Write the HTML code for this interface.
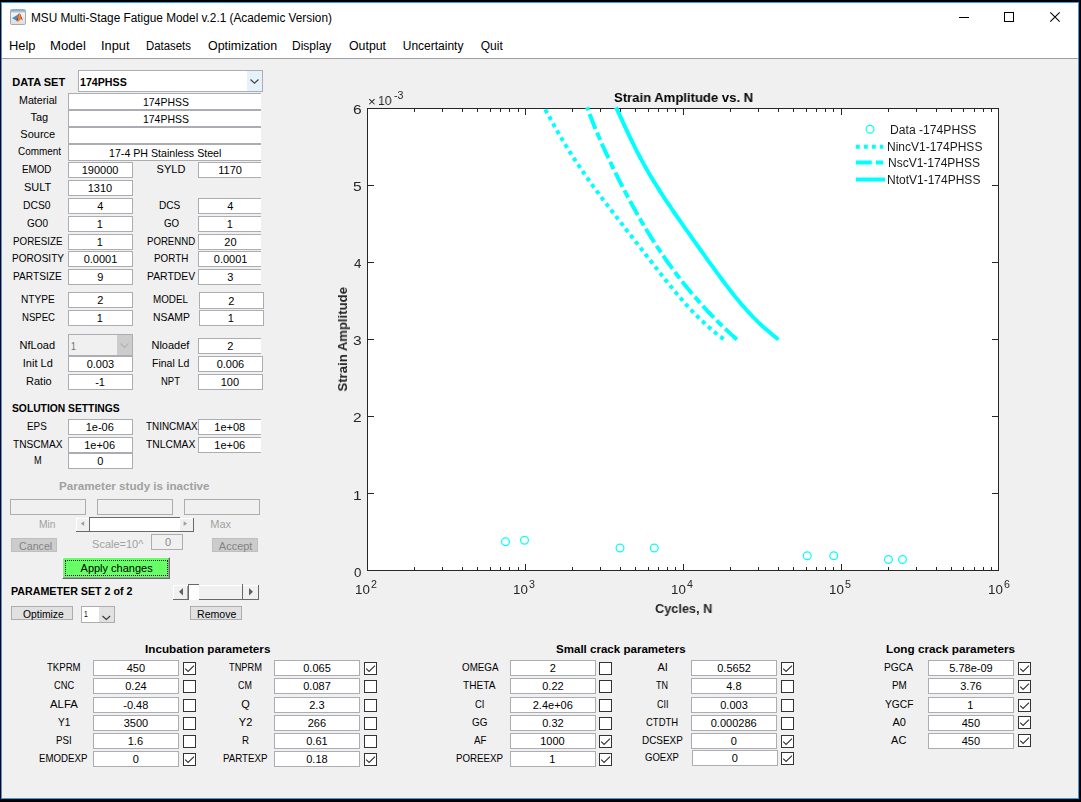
<!DOCTYPE html><html lang="en"><head><meta charset="utf-8"><title>MSU Multi-Stage Fatigue Model v.2.1 (Academic Version)</title><style>
html,body{margin:0;padding:0}
body{width:1081px;height:802px;background:#000;overflow:hidden;position:relative;font-family:"Liberation Sans",sans-serif;font-size:11px;color:#000}
#win{position:absolute;left:1px;top:2px;width:1076px;height:795px;border:1px solid #379de6;background:#f0f0f0;overflow:hidden}
#page{position:absolute;left:-2px;top:-3px;width:1081px;height:802px}
#cap{position:absolute;left:2px;top:3px;width:1076px;height:55px;background:#fff;border-bottom:1px solid #a0a0a0}
.t{position:absolute;white-space:pre;line-height:16px;height:16px;transform-origin:0 0;font-size:11px}
.ed{position:absolute;box-sizing:content-box;border:1px solid #abadb3;background:#fff}
.ed.dis2{background:#f0f0f0;border-color:#adadad}
.clip{position:absolute;overflow:hidden}
.combo{position:absolute;border:1px solid #abadb3;background:#fff}
.combo.dis{border-color:#abadb3;background:#f0f0f0}
.cbtn{position:absolute}
.chev{position:absolute}
.btn{position:absolute;border:1px solid #adadad;background:#e1e1e1}
.btn.bdis{border-color:#bfbfbf;background:#cccccc}
.cb{position:absolute;width:11px;height:11px;border:1px solid #333;background:#fff}
.cb svg{position:absolute;left:0;top:0}
.sl{position:absolute;background:#f0f0f0;box-shadow:inset -1px -1px 0 #696969,inset 1px 1px 0 #fff}
.slw{position:absolute;background:#fff;border-top:1px solid #696969;border-left:1px solid #696969}
.th{position:absolute;background:#fff;border-top:1px solid #696969;border-left:1px solid #696969}
.vln{position:absolute;width:1px;background:#696969}
.apply{position:absolute;background:#66ff66;border-top:1px solid #fff;border-left:1px solid #fff;border-right:1px solid #696969;border-bottom:1px solid #696969;box-shadow:inset -1px -1px 0 #a0a0a0}
.focus{position:absolute;left:2px;top:2px;right:1px;bottom:2px;border:1px dotted #000}
#plot{position:absolute;left:0;top:0}
.g{will-change:transform}
</style></head><body>
<div id="win"><div id="page">
<div id="cap"></div>
<section id="titlebar">
<svg style="position:absolute;left:10px;top:9px" width="16" height="16" viewBox="0 0 16 16"><defs><linearGradient id="ig" x1="0" y1="0" x2="0" y2="1"><stop offset="0" stop-color="#fafafa"/><stop offset="1" stop-color="#dedede"/></linearGradient></defs><rect x="0.5" y="0.5" width="15" height="15" rx="1.3" fill="url(#ig)" stroke="#a3abb3"/><rect x="1" y="1" width="14" height="1.6" fill="#7fb2df"/><path d="M1 3 H15" stroke="#a9b1b9" stroke-width="0.8"/><path d="M2 9.2 L8 5.5 L7.3 9 L6 11.2 Z" fill="#3d8dcf"/><path d="M8 5.5 L9 4.2 L8.7 8 L7.6 12.6 L6 11.2 L7.3 9 Z" fill="#9a3222"/><path d="M9 4.2 L9.4 3.9 L10.2 6.5 L10.6 10.4 L8.8 12.3 L7.2 13 L7.6 12.4 L8.7 8 Z" fill="#ee7e1e"/><path d="M9.3 4.4 L10 7.6 L9.5 8.4 Z" fill="#f8d22e"/><path d="M7.2 13 L8.8 12.3 L8.3 11 L7.6 12 Z" fill="#f6b526"/><path d="M9.5 3.9 L10.5 5.2 L13 11.5 L11.7 10.3 L10.6 10.4 L10.2 6.5 Z" fill="#c6402c"/></svg>
<svg style="position:absolute;left:950px;top:8px" width="120" height="20" viewBox="950 8 120 20"><path d="M959 17.5 H969" stroke="#000" stroke-width="1" shape-rendering="crispEdges"/><rect x="1004.5" y="12.5" width="9" height="9" fill="none" stroke="#000" stroke-width="1" shape-rendering="crispEdges"/><path d="M1050.3 12.3 L1059.7 21.7 M1059.7 12.3 L1050.3 21.7" stroke="#000" stroke-width="1.05"/></svg>
<span class="t ttl" style="left:30.62px;top:10.0px;font-size:12px;transform:scaleX(0.9836)">MSU Multi-Stage Fatigue Model v.2.1 (Academic Version)</span>
</section>
<section id="menubar">
<span class="t mi" style="left:9.23px;top:38.0px;font-size:12px;transform:scaleX(1.0739)">Help</span>
<span class="t mi" style="left:49.90px;top:38.0px;font-size:12px;transform:scaleX(1.0968)">Model</span>
<span class="t mi" style="left:101.23px;top:38.0px;font-size:12px;transform:scaleX(1.0654)">Input</span>
<span class="t mi" style="left:146.35px;top:38.0px;font-size:12px;transform:scaleX(0.9500)">Datasets</span>
<span class="t mi" style="left:208.30px;top:38.0px;font-size:12px;transform:scaleX(1.0364)">Optimization</span>
<span class="t mi" style="left:292.02px;top:38.0px;font-size:12px">Display</span>
<span class="t mi" style="left:348.75px;top:38.0px;font-size:12px;transform:scaleX(1.0278)">Output</span>
<span class="t mi" style="left:402.75px;top:38.0px;font-size:12px">Uncertainty</span>
<span class="t mi" style="left:480.75px;top:38.0px;font-size:12px">Quit</span>
</section>
<section id="dataset-panel">
<div class="combo" style="left:78px;top:70px;width:183px;height:20px"><div class="cbtn" style="left:168px;top:0;width:15px;height:20px;background:#e5f1fb"></div><svg class="chev" style="left:169.6px;top:7.3px" width="11" height="7" viewBox="0 0 11 7"><path d="M1.5 1.5 L5.5 5.2 L9.5 1.5" fill="none" stroke="#444" stroke-width="1.2"/></svg></div>
<div class="clip" style="left:0;top:60px;width:261px;height:420px">
<div class="ed" style="left:68px;top:33px;width:193px;height:15px"></div>
<div class="ed" style="left:68px;top:50px;width:193px;height:15px"></div>
<div class="ed" style="left:68px;top:67px;width:193px;height:15px"></div>
<div class="ed" style="left:68px;top:84px;width:193px;height:15px"></div>
<div class="ed" style="left:198px;top:102px;width:63px;height:14px"></div>
<div class="ed" style="left:198px;top:138px;width:63px;height:14px"></div>
<div class="ed" style="left:198px;top:156px;width:63px;height:14px"></div>
<div class="ed" style="left:198px;top:174px;width:63px;height:14px"></div>
<div class="ed" style="left:198px;top:191px;width:63px;height:14px"></div>
<div class="ed" style="left:198px;top:209px;width:63px;height:14px"></div>
<div class="ed" style="left:198px;top:278px;width:63px;height:14px"></div>
<div class="ed" style="left:198px;top:359px;width:63px;height:14px"></div>
<div class="ed" style="left:198px;top:377px;width:63px;height:14px"></div>
</div>
<div class="ed" style="left:68px;top:162px;width:63px;height:14px;line-height:14px"></div>
<div class="ed" style="left:68px;top:180px;width:63px;height:14px;line-height:14px"></div>
<div class="ed" style="left:68px;top:198px;width:63px;height:14px;line-height:14px"></div>
<div class="ed" style="left:68px;top:216px;width:63px;height:14px;line-height:14px"></div>
<div class="ed" style="left:68px;top:234px;width:63px;height:14px;line-height:14px"></div>
<div class="ed" style="left:68px;top:251px;width:63px;height:14px;line-height:14px"></div>
<div class="ed" style="left:68px;top:269px;width:63px;height:14px;line-height:14px"></div>
<div class="ed" style="left:68px;top:292px;width:63px;height:14px;line-height:14px"></div>
<div class="ed" style="left:68px;top:310px;width:63px;height:14px;line-height:14px"></div>
<div class="ed" style="left:68px;top:356px;width:63px;height:14px;line-height:14px"></div>
<div class="ed" style="left:68px;top:374px;width:63px;height:14px;line-height:14px"></div>
<div class="ed" style="left:68px;top:419px;width:63px;height:14px;line-height:14px"></div>
<div class="ed" style="left:68px;top:437px;width:63px;height:14px;line-height:14px"></div>
<div class="ed" style="left:68px;top:453px;width:63px;height:14px;line-height:14px"></div>
<div class="ed" style="left:199px;top:292px;width:63px;height:15px;line-height:16px"></div>
<div class="ed" style="left:199px;top:310px;width:63px;height:14px;line-height:14px"></div>
<div class="ed" style="left:198px;top:356px;width:63px;height:14px;line-height:14px"></div>
<div class="ed" style="left:198px;top:374px;width:63px;height:14px;line-height:14px"></div>
<div class="combo dis" style="left:68px;top:334px;width:63px;height:20px"><div class="cbtn" style="left:48px;top:0;width:15px;height:20px;background:#cccccc"></div><svg class="chev" style="left:49.7px;top:6.8px" width="11" height="7" viewBox="0 0 11 7"><path d="M1.5 1.5 L5.5 5.4 L9.5 1.5" fill="none" stroke="#b2b2b2" stroke-width="1.1"/></svg></div>
<span class="t" style="left:12.20px;top:74.0px;font-weight:bold">DATA SET</span>
<span class="t" style="left:80.33px;top:74.0px;font-weight:bold;transform:scaleX(0.9681)">174PHSS</span>
<span class="t" style="left:19.43px;top:92.0px;transform:scaleX(0.9697)">Material</span>
<span class="t" style="left:142.55px;top:94.0px;transform:scaleX(0.9489)">174PHSS</span>
<span class="t" style="left:30.45px;top:109.0px">Tag</span>
<span class="t" style="left:142.55px;top:111.0px;transform:scaleX(0.9489)">174PHSS</span>
<span class="t" style="left:20.33px;top:126.0px">Source</span>
<span class="t" style="left:17.50px;top:143.0px;transform:scaleX(0.9042)">Comment</span>
<span class="t" style="left:109.03px;top:145.0px;transform:scaleX(0.9674)">17-4 PH Stainless Steel</span>
<span class="t" style="left:218.30px;top:162.0px">1170</span>
<span class="t" style="left:227.30px;top:198.0px">4</span>
<span class="t" style="left:226.80px;top:216.0px">1</span>
<span class="t" style="left:224.30px;top:234.0px">20</span>
<span class="t" style="left:213.80px;top:251.0px">0.0001</span>
<span class="t" style="left:227.30px;top:269.0px">3</span>
<span class="t" style="left:227.30px;top:338.0px">2</span>
<span class="t" style="left:214.30px;top:419.0px">1e+08</span>
<span class="t" style="left:214.30px;top:437.0px">1e+06</span>
<span class="t" style="left:81.70px;top:162.0px">190000</span>
<span class="t" style="left:22.21px;top:161.0px;transform:scaleX(0.8875)">EMOD</span>
<span class="t" style="left:87.70px;top:180.0px">1310</span>
<span class="t" style="left:24.00px;top:179.0px">SULT</span>
<span class="t" style="left:97.20px;top:198.0px">4</span>
<span class="t" style="left:23.16px;top:197.0px;transform:scaleX(0.9393)">DCS0</span>
<span class="t" style="left:96.70px;top:216.0px">1</span>
<span class="t" style="left:27.25px;top:215.0px;transform:scaleX(0.9065)">GO0</span>
<span class="t" style="left:96.70px;top:234.0px">1</span>
<span class="t" style="left:12.61px;top:233.0px;transform:scaleX(0.8889)">PORESIZE</span>
<span class="t" style="left:83.70px;top:251.0px">0.0001</span>
<span class="t" style="left:11.58px;top:250.0px;transform:scaleX(0.9152)">POROSITY</span>
<span class="t" style="left:97.20px;top:269.0px">9</span>
<span class="t" style="left:12.58px;top:268.0px;transform:scaleX(0.9231)">PARTSIZE</span>
<span class="t" style="left:97.20px;top:292.0px">2</span>
<span class="t" style="left:20.58px;top:291.0px;transform:scaleX(0.9214)">NTYPE</span>
<span class="t" style="left:96.70px;top:310.0px">1</span>
<span class="t" style="left:21.63px;top:309.0px;transform:scaleX(0.8716)">NSPEC</span>
<span class="t" style="left:86.70px;top:356.0px">0.003</span>
<span class="t" style="left:22.80px;top:355.0px">Init Ld</span>
<span class="t" style="left:95.20px;top:374.0px">-1</span>
<span class="t" style="left:26.05px;top:373.0px">Ratio</span>
<span class="t" style="left:85.70px;top:419.0px">1e-06</span>
<span class="t" style="left:27.20px;top:418.0px;transform:scaleX(0.8952)">EPS</span>
<span class="t" style="left:84.20px;top:437.0px">1e+06</span>
<span class="t" style="left:13.10px;top:436.0px;transform:scaleX(0.9222)">TNSCMAX</span>
<span class="t" style="left:97.20px;top:453.0px">0</span>
<span class="t" style="left:33.77px;top:452.0px;transform:scaleX(0.8312)">M</span>
<span class="t" style="left:19.58px;top:337.0px">NfLoad</span>
<span class="t" style="left:156.62px;top:161.0px">SYLD</span>
<span class="t" style="left:159.48px;top:197.0px;transform:scaleX(0.9182)">DCS</span>
<span class="t" style="left:163.50px;top:215.0px;transform:scaleX(0.8824)">GO</span>
<span class="t" style="left:146.62px;top:233.0px;transform:scaleX(0.8750)">PORENND</span>
<span class="t" style="left:153.51px;top:250.0px;transform:scaleX(0.8946)">PORTH</span>
<span class="t" style="left:146.56px;top:268.0px;transform:scaleX(0.9450)">PARTDEV</span>
<span class="t" style="left:152.61px;top:291.0px;transform:scaleX(0.8947)">MODEL</span>
<span class="t" style="left:152.56px;top:309.0px;transform:scaleX(0.9447)">NSAMP</span>
<span class="t" style="left:151.45px;top:337.0px">Nloadef</span>
<span class="t" style="left:151.55px;top:355.0px;transform:scaleX(0.9539)">Final Ld</span>
<span class="t" style="left:160.74px;top:373.0px;transform:scaleX(0.8643)">NPT</span>
<span class="t" style="left:145.60px;top:418.0px;transform:scaleX(0.9000)">TNINCMAX</span>
<span class="t" style="left:146.25px;top:436.0px;transform:scaleX(0.9375)">TNLCMAX</span>
<span class="t" style="left:228.20px;top:293.0px">2</span>
<span class="t" style="left:227.70px;top:310.0px">1</span>
<span class="t" style="left:216.70px;top:356.0px">0.006</span>
<span class="t" style="left:220.70px;top:374.0px">100</span>
<span class="t" style="left:71.20px;top:338.0px;color:#6d6d6d;transform:scaleX(0.8000)">1</span>
</section>
<section id="solution-settings">
<span class="t" style="left:12.10px;top:400.0px;font-weight:bold;transform:scaleX(0.9361)">SOLUTION SETTINGS</span>
</section>
<section id="parameter-study">
<div class="ed dis2" style="left:10px;top:499px;width:74px;height:14px"></div>
<div class="ed dis2" style="left:97px;top:499px;width:74px;height:14px"></div>
<div class="ed dis2" style="left:184px;top:499px;width:74px;height:14px"></div>
<div class="sl" style="left:76px;top:518px;width:118px;height:14px"><div class="slw" style="left:13px;top:-1px;width:90px;height:13px"></div><svg style="position:absolute;left:4px;top:3px" width="6" height="6"><path d="M4.2 0.2 L0.8 2.5 L4.2 4.9 Z" fill="#a0a0a0"/></svg><svg style="position:absolute;left:107px;top:3px" width="6" height="6"><path d="M0.6 0.2 L4.2 2.5 L0.6 4.9 Z" fill="#a0a0a0"/></svg></div>
<div class="btn bdis" style="left:11px;top:538px;width:44px;height:12px"></div>
<div class="btn bdis" style="left:212px;top:538px;width:44px;height:12px"></div>
<div class="ed dis2" style="left:151px;top:534px;width:30px;height:14px"></div>
<div class="apply" style="left:62px;top:557px;width:106px;height:20px"><div class="focus"></div></div>
<span class="t" style="left:58.54px;top:478.0px;font-weight:bold;color:#a0a0a0;transform:scaleX(1.0567)">Parameter study is inactive</span>
<span class="t" style="left:38.82px;top:516.0px;color:#a0a0a0;transform:scaleX(0.9281)">Min</span>
<span class="t" style="left:210.25px;top:516.0px;color:#a0a0a0">Max</span>
<span class="t" style="left:18.50px;top:538.0px;color:#838383;transform:scaleX(0.9706)">Cancel</span>
<span class="t" style="left:218.80px;top:538.0px;color:#838383">Accept</span>
<span class="t" style="left:92.05px;top:536.0px;color:#a0a0a0">Scale=10^</span>
<span class="t" style="left:164.90px;top:534.0px;color:#8a8a8a">0</span>
<span class="t" style="left:80.55px;top:560.0px">Apply changes</span>
</section>
<section id="parameter-set">
<div class="sl" style="left:173px;top:585px;width:86px;height:15px"><div class="th" style="left:15px;top:-1px;width:10px;height:15px"></div><div class="vln" style="left:14px;top:1px;height:13px;background:#a0a0a0"></div><div class="vln" style="left:69px;top:-1px;height:15px"></div><svg style="position:absolute;left:5px;top:3px" width="6" height="8"><path d="M5 0 L1 3.75 L5 7.5 Z" fill="#606060"/></svg><svg style="position:absolute;left:75px;top:3px" width="6" height="8"><path d="M1 0 L5 3.75 L1 7.5 Z" fill="#606060"/></svg></div>
<div class="btn" style="left:11px;top:606px;width:60px;height:12px"></div>
<div class="btn" style="left:190px;top:606px;width:50px;height:12px"></div>
<div class="combo sm" style="left:81px;top:606px;width:32px;height:15px"><div class="cbtn" style="left:17px;top:0;width:15px;height:15px;background:#e1e1e1"></div><svg class="chev" style="left:19px;top:8px" width="11" height="6" viewBox="0 0 11 6"><path d="M1.5 1 L5.3 4.4 L9.1 1" fill="none" stroke="#333" stroke-width="1.1"/></svg></div>
<span class="t" style="left:10.53px;top:583.0px;font-weight:bold;transform:scaleX(0.9710)">PARAMETER SET 2 of 2</span>
<span class="t" style="left:22.50px;top:606.0px;transform:scaleX(0.9395)">Optimize</span>
<span class="t" style="left:196.54px;top:606.0px;transform:scaleX(0.9625)">Remove</span>
<span class="t" style="left:83.65px;top:606.0px;font-size:9px;transform:scaleX(0.7500)">1</span>
</section>
<section id="axes">
<svg id="plot" width="1081" height="802" viewBox="0 0 1081 802"><defs><clipPath id="axclip"><rect x="367.5" y="108.5" width="631.0" height="462.0"/></clipPath></defs><rect x="367.5" y="108.5" width="631.0" height="462.0" fill="#fff" stroke="none"/><circle cx="505.5" cy="541.75" r="3.9" fill="none" stroke="#00ffff" stroke-width="1.2"/><circle cx="524.5" cy="540.25" r="3.9" fill="none" stroke="#00ffff" stroke-width="1.2"/><circle cx="620" cy="548" r="3.9" fill="none" stroke="#00ffff" stroke-width="1.2"/><circle cx="654.25" cy="548" r="3.9" fill="none" stroke="#00ffff" stroke-width="1.2"/><circle cx="807.25" cy="555.75" r="3.9" fill="none" stroke="#00ffff" stroke-width="1.2"/><circle cx="833.75" cy="555.75" r="3.9" fill="none" stroke="#00ffff" stroke-width="1.2"/><circle cx="888.5" cy="559.5" r="3.9" fill="none" stroke="#00ffff" stroke-width="1.2"/><circle cx="902.5" cy="559.5" r="3.9" fill="none" stroke="#00ffff" stroke-width="1.2"/><path d="M414.5 570.5 v-3.5 M414.5 108.5 v3.5 M442.5 570.5 v-3.5 M442.5 108.5 v3.5 M462.5 570.5 v-3.5 M462.5 108.5 v3.5 M477.5 570.5 v-3.5 M477.5 108.5 v3.5 M490.5 570.5 v-3.5 M490.5 108.5 v3.5 M500.5 570.5 v-3.5 M500.5 108.5 v3.5 M509.5 570.5 v-3.5 M509.5 108.5 v3.5 M518.5 570.5 v-3.5 M518.5 108.5 v3.5 M525.5 570.5 v-6.5 M525.5 108.5 v6.5 M572.5 570.5 v-3.5 M572.5 108.5 v3.5 M600.5 570.5 v-3.5 M600.5 108.5 v3.5 M620.5 570.5 v-3.5 M620.5 108.5 v3.5 M635.5 570.5 v-3.5 M635.5 108.5 v3.5 M648.5 570.5 v-3.5 M648.5 108.5 v3.5 M658.5 570.5 v-3.5 M658.5 108.5 v3.5 M667.5 570.5 v-3.5 M667.5 108.5 v3.5 M675.5 570.5 v-3.5 M675.5 108.5 v3.5 M683.5 570.5 v-6.5 M683.5 108.5 v6.5 M730.5 570.5 v-3.5 M730.5 108.5 v3.5 M758.5 570.5 v-3.5 M758.5 108.5 v3.5 M778.5 570.5 v-3.5 M778.5 108.5 v3.5 M793.5 570.5 v-3.5 M793.5 108.5 v3.5 M806.5 570.5 v-3.5 M806.5 108.5 v3.5 M816.5 570.5 v-3.5 M816.5 108.5 v3.5 M825.5 570.5 v-3.5 M825.5 108.5 v3.5 M833.5 570.5 v-3.5 M833.5 108.5 v3.5 M841.5 570.5 v-6.5 M841.5 108.5 v6.5 M888.5 570.5 v-3.5 M888.5 108.5 v3.5 M916.5 570.5 v-3.5 M916.5 108.5 v3.5 M936.5 570.5 v-3.5 M936.5 108.5 v3.5 M951.5 570.5 v-3.5 M951.5 108.5 v3.5 M963.5 570.5 v-3.5 M963.5 108.5 v3.5 M974.5 570.5 v-3.5 M974.5 108.5 v3.5 M983.5 570.5 v-3.5 M983.5 108.5 v3.5 M991.5 570.5 v-3.5 M991.5 108.5 v3.5 M367.5 493.5 h6.5 M998.5 493.5 h-6.5 M367.5 416.5 h6.5 M998.5 416.5 h-6.5 M367.5 339.5 h6.5 M998.5 339.5 h-6.5 M367.5 262.5 h6.5 M998.5 262.5 h-6.5 M367.5 185.5 h6.5 M998.5 185.5 h-6.5" stroke="#262626" stroke-width="1" fill="none" shape-rendering="crispEdges"/><rect x="367.5" y="108.5" width="631.0" height="462.0" fill="none" stroke="#262626" stroke-width="1" shape-rendering="crispEdges"/><polyline points="544.7,108.5 546.9,112.4 549.1,116.3 551.2,120.2 553.4,124.2 555.6,128.1 557.8,132.0 560.1,135.9 562.4,139.8 564.7,143.7 567.1,147.7 569.6,151.6 572.0,155.5 574.6,159.4 577.2,163.3 579.8,167.2 582.5,171.1 585.2,175.1 588.0,179.0 590.8,182.9 593.6,186.8 596.5,190.7 599.4,194.6 602.3,198.6 605.3,202.5 608.3,206.4 611.3,210.3 614.3,214.2 617.3,218.1 620.4,222.0 623.4,226.0 626.5,229.9 629.5,233.8 632.6,237.7 635.6,241.6 638.7,245.5 641.7,249.4 644.8,253.4 647.8,257.3 650.9,261.2 653.9,265.1 657.0,269.0 660.0,272.9 663.1,276.9 666.2,280.8 669.4,284.7 672.6,288.6 675.8,292.5 679.1,296.4 682.4,300.3 685.9,304.3 689.5,308.2 693.1,312.1 697.0,316.0 700.9,319.9 705.1,323.8 709.5,327.8 714.0,331.7 718.9,335.6 724.0,339.5" fill="none" stroke="#00ffff" stroke-width="4" stroke-dasharray="4 4" stroke-dashoffset="-1.2"/><polyline points="587.1,107.3 588.5,111.2 590.0,115.2 591.5,119.1 593.1,123.0 594.7,127.0 596.3,130.9 598.0,134.8 599.7,138.8 601.4,142.7 603.2,146.7 605.0,150.6 606.8,154.5 608.6,158.5 610.5,162.4 612.3,166.3 614.2,170.3 616.2,174.2 618.1,178.1 620.1,182.1 622.1,186.0 624.2,189.9 626.2,193.9 628.3,197.8 630.4,201.8 632.6,205.7 634.8,209.6 637.0,213.6 639.2,217.5 641.5,221.4 643.8,225.4 646.2,229.3 648.6,233.2 651.0,237.2 653.5,241.1 656.1,245.0 658.6,249.0 661.3,252.9 664.0,256.9 666.7,260.8 669.5,264.7 672.4,268.7 675.3,272.6 678.3,276.5 681.3,280.5 684.4,284.4 687.6,288.3 690.9,292.3 694.2,296.2 697.7,300.1 701.2,304.1 704.7,308.0 708.4,312.0 712.2,315.9 716.1,319.8 720.0,323.8 724.1,327.7 728.2,331.6 732.5,335.6 736.9,339.5" fill="none" stroke="#00ffff" stroke-width="4" stroke-dasharray="16 4 8 4" stroke-dashoffset="24.8"/><polyline points="615.9,107.3 617.8,111.2 619.7,115.2 621.5,119.1 623.3,123.0 625.1,127.0 627.0,130.9 628.8,134.8 630.7,138.8 632.6,142.7 634.6,146.7 636.5,150.6 638.6,154.5 640.7,158.5 642.8,162.4 645.0,166.3 647.2,170.3 649.5,174.2 651.9,178.1 654.3,182.1 656.7,186.0 659.2,189.9 661.7,193.9 664.3,197.8 666.9,201.8 669.6,205.7 672.2,209.6 674.9,213.6 677.6,217.5 680.4,221.4 683.1,225.4 685.9,229.3 688.7,233.2 691.5,237.2 694.3,241.1 697.1,245.0 699.9,249.0 702.7,252.9 705.5,256.9 708.3,260.8 711.1,264.7 714.0,268.7 716.9,272.6 719.8,276.5 722.7,280.5 725.6,284.4 728.6,288.3 731.7,292.3 734.8,296.2 738.0,300.1 741.3,304.1 744.8,308.0 748.3,312.0 752.0,315.9 755.9,319.8 759.9,323.8 764.2,327.7 768.7,331.6 773.5,335.6 778.5,339.5" fill="none" stroke="#00ffff" stroke-width="4"/><circle cx="870" cy="129.3" r="3.9" fill="none" stroke="#00ffff" stroke-width="1.2"/><path d="M855.8 146.8 H883.3" stroke="#00ffff" stroke-width="4" stroke-dasharray="4 4" fill="none"/><path d="M855.8 162.5 H883.3" stroke="#00ffff" stroke-width="4" stroke-dasharray="16 4 8 4" fill="none"/><path d="M855.8 179.5 H885" stroke="#00ffff" stroke-width="4" fill="none"/></svg>
<span class="t g" id="ylab" style="left:0;top:0;font-size:13.33px;font-weight:bold;color:#262626;transform-origin:0 0;transform:translate(335.0px,391.5px) rotate(-90deg) scaleX(0.984)">Strain Amplitude</span>
<span class="t g" style="left:613.52px;top:90.0px;font-size:13.33px;font-weight:bold;transform:scaleX(0.9821)">Strain Amplitude vs. N</span>
<span class="t g" style="left:654.50px;top:601.0px;font-size:13.33px;font-weight:bold;color:#262626;transform:scaleX(0.9542)">Cycles, N</span>
<span class="t g" style="left:354.00px;top:564.6px;font-size:13.33px;color:#262626">0</span>
<span class="t g" style="left:352.83px;top:487.5px;font-size:13.33px;color:#262626;transform:scaleX(1.1667)">1</span>
<span class="t g" style="left:352.83px;top:410.4px;font-size:13.33px;color:#262626;transform:scaleX(1.1667)">2</span>
<span class="t g" style="left:352.83px;top:333.3px;font-size:13.33px;color:#262626;transform:scaleX(1.1667)">3</span>
<span class="t g" style="left:354.00px;top:256.3px;font-size:13.33px;color:#262626">4</span>
<span class="t g" style="left:352.83px;top:179.2px;font-size:13.33px;color:#262626;transform:scaleX(1.1667)">5</span>
<span class="t g" style="left:352.83px;top:102.1px;font-size:13.33px;color:#262626;transform:scaleX(1.1667)">6</span>
<span class="t g" style="left:355.45px;top:582.2px;font-size:13.33px;color:#262626">10</span>
<span class="t g" style="left:371.35px;top:576.2px;font-size:10.67px;color:#262626">2</span>
<span class="t g" style="left:513.45px;top:582.2px;font-size:13.33px;color:#262626">10</span>
<span class="t g" style="left:529.35px;top:576.2px;font-size:10.67px;color:#262626">3</span>
<span class="t g" style="left:671.45px;top:582.2px;font-size:13.33px;color:#262626">10</span>
<span class="t g" style="left:687.35px;top:576.2px;font-size:10.67px;color:#262626">4</span>
<span class="t g" style="left:829.45px;top:582.2px;font-size:13.33px;color:#262626">10</span>
<span class="t g" style="left:845.35px;top:576.2px;font-size:10.67px;color:#262626">5</span>
<span class="t g" style="left:987.65px;top:582.2px;font-size:13.33px;color:#262626">10</span>
<span class="t g" style="left:1003.55px;top:576.2px;font-size:10.67px;color:#262626">6</span>
<span class="t g" style="left:367.95px;top:94.2px;font-size:13.33px;color:#262626">×</span>
<span class="t g" style="left:377.99px;top:93.0px;font-size:13.33px;color:#262626;transform:scaleX(0.9071)">10</span>
<span class="t g" style="left:393.60px;top:87.0px;font-size:10.67px;color:#262626">-3</span>
<span class="t g" style="left:890.24px;top:122.0px;font-size:12px;color:#1a1a1a;transform:scaleX(1.0119)">Data -174PHSS</span>
<span class="t g" style="left:887.35px;top:139.0px;font-size:12px;color:#1a1a1a">NincV1-174PHSS</span>
<span class="t g" style="left:887.60px;top:155.0px;font-size:12px;color:#1a1a1a">NscV1-174PHSS</span>
<span class="t g" style="left:887.48px;top:172.0px;font-size:12px;color:#1a1a1a">NtotV1-174PHSS</span>
</section>
<section id="incubation-parameters">
<div class="ed" style="left:93px;top:660px;width:84px;height:14px;line-height:14px"></div>
<div class="cb" style="left:183px;top:662px"><svg width="11" height="11" viewBox="0 0 11 11"><path d="M1.2 5.6 L4.1 8.5 L10 2.6" fill="none" stroke="#333" stroke-width="1.15"/></svg></div>
<div class="ed" style="left:93px;top:678px;width:84px;height:14px;line-height:14px"></div>
<div class="cb" style="left:183px;top:680px"></div>
<div class="ed" style="left:93px;top:697px;width:84px;height:14px;line-height:14px"></div>
<div class="cb" style="left:183px;top:699px"></div>
<div class="ed" style="left:93px;top:715px;width:84px;height:14px;line-height:14px"></div>
<div class="cb" style="left:183px;top:717px"></div>
<div class="ed" style="left:93px;top:733px;width:84px;height:14px;line-height:14px"></div>
<div class="cb" style="left:183px;top:735px"></div>
<div class="ed" style="left:93px;top:751px;width:84px;height:14px;line-height:14px"></div>
<div class="cb" style="left:183px;top:753px"><svg width="11" height="11" viewBox="0 0 11 11"><path d="M1.2 5.6 L4.1 8.5 L10 2.6" fill="none" stroke="#333" stroke-width="1.15"/></svg></div>
<div class="ed" style="left:274px;top:660px;width:84px;height:14px;line-height:14px"></div>
<div class="cb" style="left:364px;top:662px"><svg width="11" height="11" viewBox="0 0 11 11"><path d="M1.2 5.6 L4.1 8.5 L10 2.6" fill="none" stroke="#333" stroke-width="1.15"/></svg></div>
<div class="ed" style="left:274px;top:678px;width:84px;height:14px;line-height:14px"></div>
<div class="cb" style="left:364px;top:680px"></div>
<div class="ed" style="left:274px;top:697px;width:84px;height:14px;line-height:14px"></div>
<div class="cb" style="left:364px;top:699px"></div>
<div class="ed" style="left:274px;top:715px;width:84px;height:14px;line-height:14px"></div>
<div class="cb" style="left:364px;top:717px"></div>
<div class="ed" style="left:274px;top:733px;width:84px;height:14px;line-height:14px"></div>
<div class="cb" style="left:364px;top:735px"></div>
<div class="ed" style="left:274px;top:751px;width:84px;height:14px;line-height:14px"></div>
<div class="cb" style="left:364px;top:753px"><svg width="11" height="11" viewBox="0 0 11 11"><path d="M1.2 5.6 L4.1 8.5 L10 2.6" fill="none" stroke="#333" stroke-width="1.15"/></svg></div>
<span class="t" style="left:145.19px;top:641.0px;font-weight:bold;transform:scaleX(1.0628)">Incubation parameters</span>
<span class="t" style="left:126.75px;top:660.0px">450</span>
<span class="t" style="left:47.10px;top:659.0px;transform:scaleX(0.8724)">TKPRM</span>
<span class="t" style="left:125.25px;top:678.0px">0.24</span>
<span class="t" style="left:53.50px;top:677.0px;transform:scaleX(0.8438)">CNC</span>
<span class="t" style="left:123.25px;top:697.0px">-0.48</span>
<span class="t" style="left:50.00px;top:696.0px;transform:scaleX(1.0333)">ALFA</span>
<span class="t" style="left:123.75px;top:715.0px">3500</span>
<span class="t" style="left:57.50px;top:714.0px;transform:scaleX(0.9154)">Y1</span>
<span class="t" style="left:127.75px;top:733.0px">1.6</span>
<span class="t" style="left:55.74px;top:732.0px;transform:scaleX(0.8850)">PSI</span>
<span class="t" style="left:132.75px;top:751.0px">0</span>
<span class="t" style="left:39.12px;top:750.0px;transform:scaleX(0.8796)">EMODEXP</span>
<span class="t" style="left:303.25px;top:660.0px">0.065</span>
<span class="t" style="left:228.75px;top:659.0px;transform:scaleX(0.8423)">TNPRM</span>
<span class="t" style="left:303.25px;top:678.0px">0.087</span>
<span class="t" style="left:237.50px;top:677.0px;transform:scaleX(0.8088)">CM</span>
<span class="t" style="left:309.25px;top:697.0px">2.3</span>
<span class="t" style="left:241.30px;top:696.0px">Q</span>
<span class="t" style="left:307.75px;top:715.0px">266</span>
<span class="t" style="left:238.82px;top:714.0px">Y2</span>
<span class="t" style="left:306.25px;top:733.0px">0.61</span>
<span class="t" style="left:241.66px;top:732.0px;transform:scaleX(0.8850)">R</span>
<span class="t" style="left:306.25px;top:751.0px">0.18</span>
<span class="t" style="left:222.63px;top:750.0px;transform:scaleX(0.8850)">PARTEXP</span>
</section>
<section id="small-crack-parameters">
<div class="ed" style="left:510px;top:660px;width:84px;height:14px;line-height:14px"></div>
<div class="cb" style="left:599px;top:662px"></div>
<div class="ed" style="left:510px;top:678px;width:84px;height:14px;line-height:14px"></div>
<div class="cb" style="left:599px;top:680px"></div>
<div class="ed" style="left:510px;top:697px;width:84px;height:14px;line-height:14px"></div>
<div class="cb" style="left:599px;top:699px"></div>
<div class="ed" style="left:510px;top:715px;width:84px;height:14px;line-height:14px"></div>
<div class="cb" style="left:599px;top:717px"></div>
<div class="ed" style="left:510px;top:733px;width:84px;height:14px;line-height:14px"></div>
<div class="cb" style="left:599px;top:735px"><svg width="11" height="11" viewBox="0 0 11 11"><path d="M1.2 5.6 L4.1 8.5 L10 2.6" fill="none" stroke="#333" stroke-width="1.15"/></svg></div>
<div class="ed" style="left:510px;top:751px;width:84px;height:14px;line-height:14px"></div>
<div class="cb" style="left:599px;top:753px"><svg width="11" height="11" viewBox="0 0 11 11"><path d="M1.2 5.6 L4.1 8.5 L10 2.6" fill="none" stroke="#333" stroke-width="1.15"/></svg></div>
<div class="ed" style="left:691px;top:660px;width:84px;height:14px;line-height:14px"></div>
<div class="cb" style="left:781px;top:662px"><svg width="11" height="11" viewBox="0 0 11 11"><path d="M1.2 5.6 L4.1 8.5 L10 2.6" fill="none" stroke="#333" stroke-width="1.15"/></svg></div>
<div class="ed" style="left:691px;top:678px;width:84px;height:14px;line-height:14px"></div>
<div class="cb" style="left:781px;top:680px"></div>
<div class="ed" style="left:691px;top:697px;width:84px;height:14px;line-height:14px"></div>
<div class="cb" style="left:781px;top:699px"></div>
<div class="ed" style="left:691px;top:715px;width:84px;height:14px;line-height:14px"></div>
<div class="cb" style="left:781px;top:717px"></div>
<div class="ed" style="left:691px;top:733px;width:84px;height:14px;line-height:14px"></div>
<div class="cb" style="left:781px;top:735px"><svg width="11" height="11" viewBox="0 0 11 11"><path d="M1.2 5.6 L4.1 8.5 L10 2.6" fill="none" stroke="#333" stroke-width="1.15"/></svg></div>
<div class="ed" style="left:692px;top:750px;width:84px;height:14px;line-height:14px"></div>
<div class="cb" style="left:781px;top:752px"><svg width="11" height="11" viewBox="0 0 11 11"><path d="M1.2 5.6 L4.1 8.5 L10 2.6" fill="none" stroke="#333" stroke-width="1.15"/></svg></div>
<span class="t" style="left:556.25px;top:641.0px;font-weight:bold;transform:scaleX(1.0500)">Small crack parameters</span>
<span class="t" style="left:549.75px;top:660.0px">2</span>
<span class="t" style="left:461.50px;top:659.0px;transform:scaleX(0.8927)">OMEGA</span>
<span class="t" style="left:542.25px;top:678.0px">0.22</span>
<span class="t" style="left:463.40px;top:677.0px;transform:scaleX(0.9200)">THETA</span>
<span class="t" style="left:532.75px;top:697.0px">2.4e+06</span>
<span class="t" style="left:475.40px;top:696.0px;transform:scaleX(0.8600)">CI</span>
<span class="t" style="left:542.25px;top:715.0px">0.32</span>
<span class="t" style="left:472.25px;top:714.0px;transform:scaleX(0.8971)">GG</span>
<span class="t" style="left:540.25px;top:733.0px">1000</span>
<span class="t" style="left:473.50px;top:732.0px;transform:scaleX(0.8850)">AF</span>
<span class="t" style="left:549.25px;top:751.0px">1</span>
<span class="t" style="left:455.81px;top:750.0px;transform:scaleX(0.8850)">POREEXP</span>
<span class="t" style="left:717.25px;top:660.0px">0.5652</span>
<span class="t" style="left:657.38px;top:659.0px">AI</span>
<span class="t" style="left:726.25px;top:678.0px">4.8</span>
<span class="t" style="left:656.00px;top:677.0px;transform:scaleX(0.8214)">TN</span>
<span class="t" style="left:720.25px;top:697.0px">0.003</span>
<span class="t" style="left:656.50px;top:696.0px;transform:scaleX(0.8154)">CII</span>
<span class="t" style="left:710.75px;top:715.0px">0.000286</span>
<span class="t" style="left:645.60px;top:714.0px;transform:scaleX(0.8622)">CTDTH</span>
<span class="t" style="left:730.75px;top:733.0px">0</span>
<span class="t" style="left:641.50px;top:732.0px;transform:scaleX(0.9023)">DCSEXP</span>
<span class="t" style="left:731.75px;top:750.0px">0</span>
<span class="t" style="left:644.70px;top:749.0px;transform:scaleX(0.8667)">GOEXP</span>
</section>
<section id="long-crack-parameters">
<div class="ed" style="left:928px;top:660px;width:84px;height:14px;line-height:14px"></div>
<div class="cb" style="left:1018px;top:662px"><svg width="11" height="11" viewBox="0 0 11 11"><path d="M1.2 5.6 L4.1 8.5 L10 2.6" fill="none" stroke="#333" stroke-width="1.15"/></svg></div>
<div class="ed" style="left:928px;top:678px;width:84px;height:14px;line-height:14px"></div>
<div class="cb" style="left:1018px;top:680px"><svg width="11" height="11" viewBox="0 0 11 11"><path d="M1.2 5.6 L4.1 8.5 L10 2.6" fill="none" stroke="#333" stroke-width="1.15"/></svg></div>
<div class="ed" style="left:928px;top:697px;width:84px;height:14px;line-height:14px"></div>
<div class="cb" style="left:1018px;top:699px"><svg width="11" height="11" viewBox="0 0 11 11"><path d="M1.2 5.6 L4.1 8.5 L10 2.6" fill="none" stroke="#333" stroke-width="1.15"/></svg></div>
<div class="ed" style="left:928px;top:715px;width:84px;height:14px;line-height:14px"></div>
<div class="cb" style="left:1018px;top:716px"><svg width="11" height="11" viewBox="0 0 11 11"><path d="M1.2 5.6 L4.1 8.5 L10 2.6" fill="none" stroke="#333" stroke-width="1.15"/></svg></div>
<div class="ed" style="left:928px;top:733px;width:84px;height:14px;line-height:14px"></div>
<div class="cb" style="left:1018px;top:734px"><svg width="11" height="11" viewBox="0 0 11 11"><path d="M1.2 5.6 L4.1 8.5 L10 2.6" fill="none" stroke="#333" stroke-width="1.15"/></svg></div>
<span class="t" style="left:886.43px;top:641.0px;font-weight:bold;transform:scaleX(1.0667)">Long crack parameters</span>
<span class="t" style="left:949.25px;top:660.0px">5.78e-09</span>
<span class="t" style="left:883.67px;top:659.0px;transform:scaleX(0.9300)">PGCA</span>
<span class="t" style="left:960.25px;top:678.0px">3.76</span>
<span class="t" style="left:891.51px;top:677.0px;transform:scaleX(0.8933)">PM</span>
<span class="t" style="left:967.25px;top:697.0px">1</span>
<span class="t" style="left:884.60px;top:696.0px;transform:scaleX(0.9300)">YGCF</span>
<span class="t" style="left:961.75px;top:715.0px">450</span>
<span class="t" style="left:892.40px;top:714.0px">A0</span>
<span class="t" style="left:961.75px;top:733.0px">450</span>
<span class="t" style="left:891.05px;top:732.0px">AC</span>
</section>
</div></div></body></html>
